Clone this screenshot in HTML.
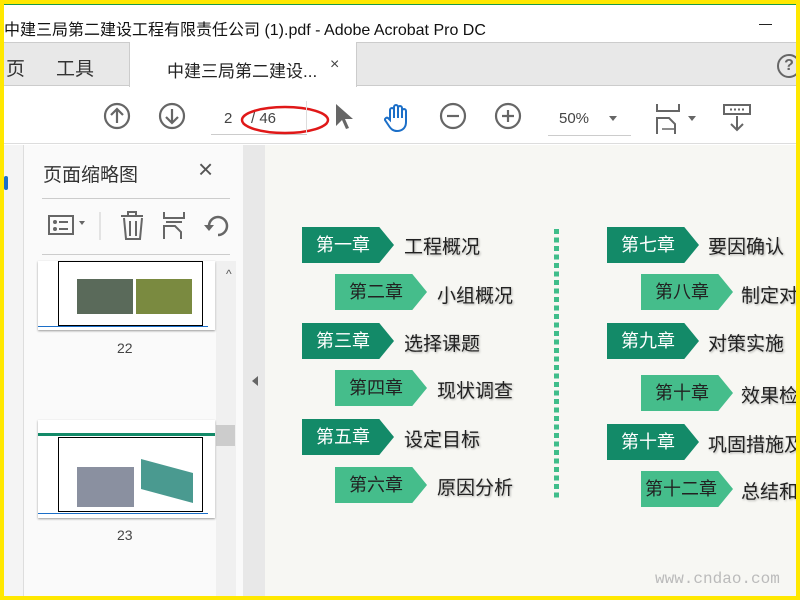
<!DOCTYPE html>
<html><head><meta charset="utf-8"><style>
*{margin:0;padding:0;box-sizing:border-box}
body{width:800px;height:600px;overflow:hidden;background:#ffe800;font-family:"Liberation Sans","Noto Sans CJK SC",sans-serif;position:relative}
.a{position:absolute;white-space:nowrap}
.ch{position:absolute;height:36px;color:#fff;font-size:18px;line-height:36px;padding-left:14px;clip-path:polygon(0 0,84% 0,100% 50%,84% 100%,0 100%);white-space:nowrap}
.d{background:#138a68;width:92px}
.l{background:#45bd8b;width:92px;color:#222}
.t{position:absolute;font-size:19px;color:#222;text-shadow:1px 1px 2px rgba(0,0,0,.3);white-space:nowrap}
</style></head><body>
<div class="a" style="left:4px;top:4px;width:792px;height:592px;background:#fff;overflow:hidden">
<div class="a" style="left:0;top:0;width:792px;height:1px;background:#1a9a4a"></div>
<div class="a" style="left:0;top:12px;font-size:16px;color:#111">中建三局第二建设工程有限责任公司 (1).pdf - Adobe Acrobat Pro DC</div>
<div class="a" style="left:755px;top:20px;width:13px;height:1px;background:#222"></div>
<div class="a" style="left:0;top:38px;width:792px;height:44px;background:#e8e8e8;border-top:1px solid #ccc;border-bottom:1px solid #ccc"></div>
<div class="a" style="left:2px;top:50px;font-size:19px;color:#333">页</div>
<div class="a" style="left:52px;top:50px;font-size:19px;color:#333">工具</div>
<div class="a" style="left:125px;top:38px;width:228px;height:45px;background:#fff;border-left:1px solid #ccc;border-right:1px solid #ccc"></div>
<div class="a" style="left:163px;top:53px;font-size:17px;color:#222">中建三局第二建设...</div>
<div class="a" style="left:326px;top:52px;font-size:16px;color:#444">×</div>
<div class="a" style="left:773px;top:50px;width:24px;height:24px;border:2px solid #666;border-radius:50%;text-align:center;font-size:16px;line-height:20px;color:#666;font-weight:bold">?</div>
<div class="a" style="left:0;top:83px;width:792px;height:57px;background:#fff;border-bottom:1px solid #ddd"></div>
<svg class="a" style="left:98px;top:97px" width="30" height="30"><circle cx="15" cy="15" r="12" fill="none" stroke="#666" stroke-width="2.2"/><path d="M15 22V8M9 14l6-6 6 6" fill="none" stroke="#666" stroke-width="2.2"/></svg>
<svg class="a" style="left:153px;top:97px" width="30" height="30"><circle cx="15" cy="15" r="12" fill="none" stroke="#666" stroke-width="2.2"/><path d="M15 8v14M9 16l6 6 6-6" fill="none" stroke="#666" stroke-width="2.2"/></svg>
<div class="a" style="left:207px;top:130px;width:96px;height:1px;background:#ccc"></div>
<div class="a" style="left:220px;top:106px;font-size:15px;color:#444">2</div>
<div class="a" style="left:247px;top:106px;font-size:15px;color:#444">/ 46</div>
<svg class="a" style="left:235px;top:96px" width="95" height="40"><ellipse cx="46" cy="20" rx="43" ry="13" fill="none" stroke="#e01818" stroke-width="2.5"/></svg>
<div class="a" style="left:302px;top:97px;width:1px;height:32px;background:#ddd"></div>
<svg class="a" style="left:328px;top:98px" width="24" height="30"><path d="M4 2v22l6-6 4 9 3-1-4-9h8z" fill="#666"/></svg>
<svg class="a" style="left:378px;top:98px" width="32" height="32"><path d="M8 18V8a2 2 0 014 0v8V5a2 2 0 014 0v11V6a2 2 0 014 0v10V9a2 2 0 014 0v11c0 6-4 9-9 9-4 0-6-2-8-5l-4-6a2 2 0 013-2z" fill="none" stroke="#1c6fc8" stroke-width="2"/></svg>
<svg class="a" style="left:434px;top:97px" width="30" height="30"><circle cx="15" cy="15" r="12" fill="none" stroke="#666" stroke-width="2.2"/><path d="M9 15h12" stroke="#666" stroke-width="2.2"/></svg>
<svg class="a" style="left:489px;top:97px" width="30" height="30"><circle cx="15" cy="15" r="12" fill="none" stroke="#666" stroke-width="2.2"/><path d="M9 15h12M15 9v12" stroke="#666" stroke-width="2.2"/></svg>
<div class="a" style="left:555px;top:106px;font-size:15px;color:#444">50%</div>
<div class="a" style="left:605px;top:112px;border:4px solid transparent;border-top:5px solid #666"></div>
<div class="a" style="left:544px;top:131px;width:83px;height:1px;background:#ccc"></div>
<svg class="a" style="left:650px;top:98px" width="30" height="32"><path d="M3 2v7h22V2M3 32V16h12l6 6v10" fill="none" stroke="#666" stroke-width="2"/><path d="M8 27h12" stroke="#666" stroke-width="1.5"/></svg>
<div class="a" style="left:684px;top:112px;border:4px solid transparent;border-top:5px solid #666"></div>
<svg class="a" style="left:718px;top:98px" width="30" height="32"><rect x="2" y="3" width="26" height="9" fill="none" stroke="#666" stroke-width="2"/><path d="M8 7.5h2M12 7.5h2M16 7.5h2M20 7.5h2" stroke="#666" stroke-width="2"/><path d="M15 14v14M9 22l6 6 6-6" fill="none" stroke="#666" stroke-width="2"/></svg>
<div class="a" style="left:0;top:141px;width:20px;height:451px;background:#f4f4f4;border-right:1px solid #ddd"></div>
<div class="a" style="left:0;top:172px;width:4px;height:14px;background:#1c6fc8;border-radius:2px"></div>
<div class="a" style="left:20px;top:141px;width:224px;height:451px;background:#fafafa"></div>
<div class="a" style="left:39px;top:156px;font-size:19px;color:#333">页面缩略图</div>
<div class="a" style="left:194px;top:150px;font-size:26px;color:#555">×</div>
<div class="a" style="left:38px;top:194px;width:188px;height:1px;background:#ccc"></div>
<div class="a" style="left:38px;top:250px;width:188px;height:1px;background:#ccc"></div>
<svg class="a" style="left:38px;top:205px" width="200" height="36"><rect x="7" y="7" width="24" height="18" fill="none" stroke="#666" stroke-width="2"/><circle cx="13" cy="13" r="2" fill="#666"/><circle cx="13" cy="20" r="2" fill="#666"/><path d="M17 13h9M17 20h9" stroke="#666" stroke-width="2"/><path d="M37 12l3 4 3-4z" fill="#666"/><path d="M58 3v28" stroke="#ccc"/><path d="M79 7h22M86 7V3h8v4M82 9l2 21h14l2-21M88 12v15M94 12v15" fill="none" stroke="#666" stroke-width="2"/><path d="M122 3v6h20V3M122 30V17h11l6 6v7M124 13h16" fill="none" stroke="#666" stroke-width="2"/><path d="M176 26a9 9 0 10-9-9" fill="none" stroke="#666" stroke-width="2.5"/><path d="M162 16l5 6 5-6z" fill="#666"/></svg>
<div class="a" style="left:212px;top:257px;width:20px;height:335px;background:#f0f0f0"></div>
<div class="a" style="left:222px;top:263px;font-size:12px;color:#555">^</div>
<div class="a" style="left:212px;top:421px;width:19px;height:21px;background:#ccc"></div>
<div class="a" style="left:34px;top:257px;width:177px;height:69px;background:#fff;box-shadow:0 1px 2px #999">
<div class="a" style="left:20px;top:0;width:145px;height:65px;border:1px solid #000"></div>
<div class="a" style="left:39px;top:18px;width:56px;height:35px;background:#5a6a5a"></div>
<div class="a" style="left:98px;top:18px;width:56px;height:35px;background:#7a8a40"></div>
<div class="a" style="left:0;top:65px;width:170px;height:1px;background:#1c6fc8"></div></div>
<div class="a" style="left:113px;top:336px;font-size:14px;color:#444">22</div>
<div class="a" style="left:34px;top:416px;width:177px;height:98px;background:#fff;box-shadow:0 1px 2px #999">
<div class="a" style="left:0;top:13px;width:177px;height:3px;background:#138a68"></div>
<div class="a" style="left:20px;top:17px;width:145px;height:75px;border:1px solid #000"></div>
<div class="a" style="left:39px;top:47px;width:57px;height:40px;background:#8a90a0"></div>
<div class="a" style="left:103px;top:46px;width:52px;height:30px;background:#4a9a90;transform:skewY(15deg)"></div>
<div class="a" style="left:0;top:93px;width:170px;height:1px;background:#1c6fc8"></div></div>
<div class="a" style="left:113px;top:523px;font-size:14px;color:#444">23</div>
<div class="a" style="left:239px;top:141px;width:22px;height:451px;background:#e8e8e8"></div>
<div class="a" style="left:248px;top:372px;border:5px solid transparent;border-right:6px solid #666;border-left:0"></div>
<div class="a" style="left:261px;top:141px;width:531px;height:451px;background:#f7f7f3;overflow:hidden">
<div class="ch d" style="left:37px;top:82px">第一章</div><div class="t" style="left:139px;top:87px">工程概况</div>
<div class="ch l" style="left:70px;top:129px">第二章</div><div class="t" style="left:172px;top:136px">小组概况</div>
<div class="ch d" style="left:37px;top:178px">第三章</div><div class="t" style="left:139px;top:184px">选择课题</div>
<div class="ch l" style="left:70px;top:225px">第四章</div><div class="t" style="left:172px;top:231px">现状调查</div>
<div class="ch d" style="left:37px;top:274px">第五章</div><div class="t" style="left:139px;top:280px">设定目标</div>
<div class="ch l" style="left:70px;top:322px">第六章</div><div class="t" style="left:172px;top:328px">原因分析</div>
<div class="a" style="left:289px;top:84px;width:5px;height:270px;background:repeating-linear-gradient(#3fbd8a 0 5px,transparent 5px 8.5px)"></div>
<div class="ch d" style="left:342px;top:82px">第七章</div><div class="t" style="left:443px;top:87px">要因确认</div>
<div class="ch l" style="left:376px;top:129px">第八章</div><div class="t" style="left:476px;top:136px">制定对</div>
<div class="ch d" style="left:342px;top:178px">第九章</div><div class="t" style="left:443px;top:184px">对策实施</div>
<div class="ch l" style="left:376px;top:230px">第十章</div><div class="t" style="left:476px;top:236px">效果检</div>
<div class="ch d" style="left:342px;top:279px">第十章</div><div class="t" style="left:443px;top:285px">巩固措施及</div>
<div class="ch l" style="left:376px;top:326px;padding-left:4px">第十二章</div><div class="t" style="left:476px;top:332px">总结和</div>
<div class="a" style="left:390px;top:425px;font-size:16px;color:#bbb;font-family:'Liberation Mono',monospace">www.cndao.com</div>
</div>
</div>
</body></html>
